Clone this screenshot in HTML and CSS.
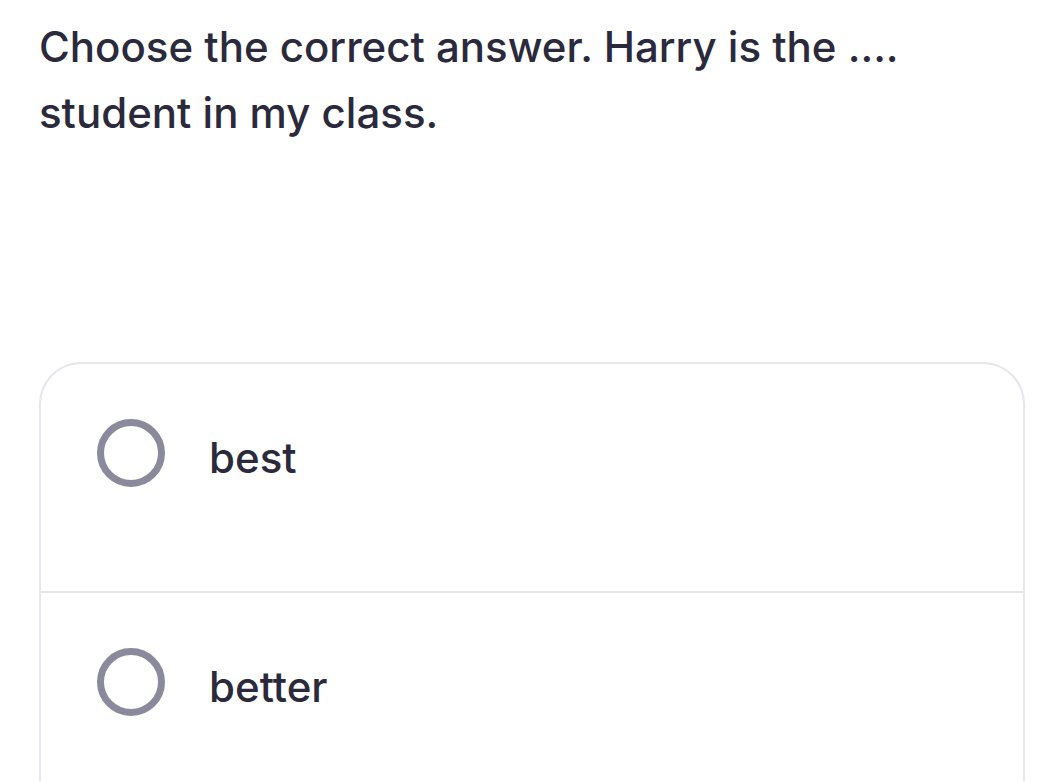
FILE: index.html
```html
<!DOCTYPE html>
<html lang="en">
<head>
<meta charset="utf-8">
<title>Question</title>
<link rel="stylesheet" href="styles.css">
</head>
<body>
<main class="page">
  <h1 class="question">Choose the correct answer. Harry is the .... student in my class.</h1>
  <div class="options">
    <label class="option">
      <span class="radio"></span>
      <span class="label">best</span>
    </label>
    <label class="option">
      <span class="radio"></span>
      <span class="label">better</span>
    </label>
  </div>
</main>
</body>
</html>
```
FILE: styles.css
```css
html, body {
  margin: 0;
  padding: 0;
  background: #ffffff;
}
body {
  font-family: Inter, "Noto Sans", "Liberation Sans", sans-serif;
  color: #2a2a3c;
}
.page {
  padding: 14px 38px 0 39px;
}
.question {
  margin: 0;
  width: 900px;
  font-size: 42px;
  font-weight: 500;
  line-height: 66px;
  letter-spacing: 0;
}
.options {
  margin-top: 216px;
  border: 2px solid #e6e6ec;
  border-bottom: none;
  border-radius: 42px 42px 0 0;
  width: 982px;
}
.option {
  display: flex;
  align-items: flex-start;
  gap: 44px;
  height: 172px;
  padding: 55px 0 0 56px;
}
.option + .option {
  border-top: 2px solid #e6e6ec;
}
.radio {
  width: 54px;
  height: 54px;
  border: 7px solid #8a8a9c;
  border-radius: 50%;
  flex: none;
}
.label {
  margin-top: 5px;
  font-size: 42px;
  font-weight: 500;
  line-height: 68px;
}
```
